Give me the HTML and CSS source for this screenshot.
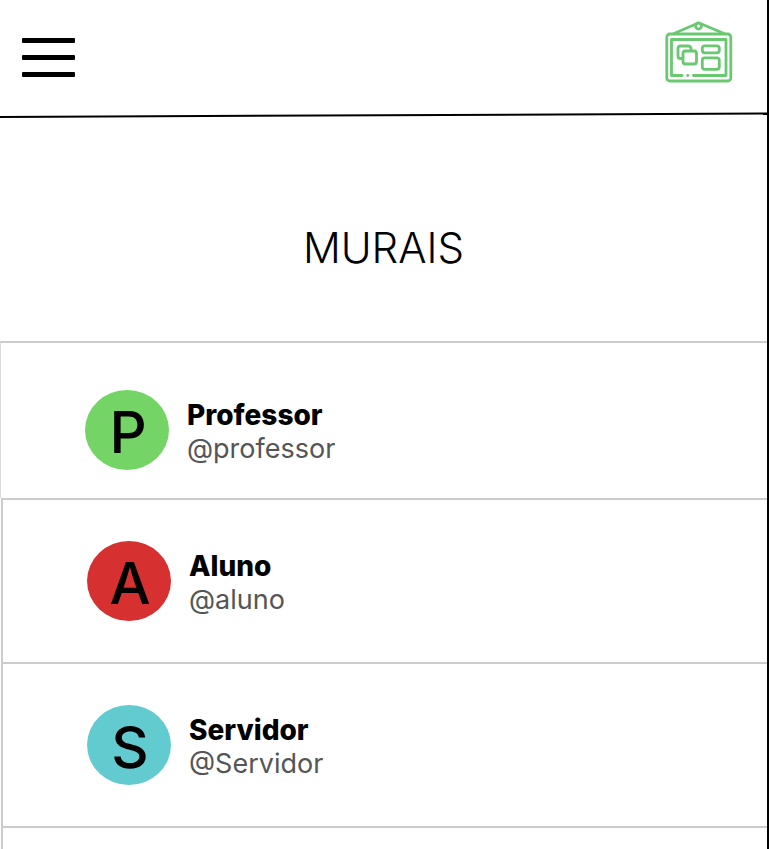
FILE: index.html
```html
<!DOCTYPE html>
<html lang="pt-BR">
<head>
<meta charset="utf-8">
<meta name="viewport" content="width=device-width, initial-scale=1">
<title>Murais</title>
<link rel="stylesheet" href="styles.css">
</head>
<body>
<header class="topbar">
  <button class="menu" type="button" aria-label="Menu"><span></span><span></span><span></span></button>
  <a class="logo" href="#" aria-label="Murais">
    <svg width="68" height="62" viewBox="0 0 68 62" fill="none" stroke="#69c870" stroke-width="2.8" stroke-linecap="round" stroke-linejoin="round">
      <rect x="1.800" y="13" width="64" height="47" rx="3"/>
      <path d="M17 54.500H6.500V18.500H61V54.500H28.500"/>
      <path d="M9 12.500L31 3M59 12.500L36.500 3"/>
      <circle cx="33.500" cy="5" r="3"/>
      <path d="M17.500 37.500H15.500a2.500 2.500 0 0 1-2.500-2.500V27.500a2.500 2.500 0 0 1 2.500-2.500H23.500a2.500 2.500 0 0 1 2.500 2.500V29"/>
      <rect x="18" y="30" width="13.500" height="13" rx="2.500"/>
      <rect x="37.300" y="24.800" width="17" height="7" rx="2.500"/>
      <rect x="37.300" y="36.800" width="17" height="11.500" rx="2.500"/>
      <path d="M22.700 54.500h.1"/>
    </svg>
  </a>
</header>
<svg class="divider" viewBox="0 0 768 6" preserveAspectRatio="none" aria-hidden="true"><path d="M0 5L768 1.500" stroke="#000" stroke-width="2"/></svg>
<main>
  <h1 class="title">MURAIS</h1>
  <ul class="boards">
    <li class="board board-first">
      <span class="avatar green">P</span>
      <div class="info"><a class="name" href="#">Professor</a><span class="handle">@professor</span></div>
    </li>
    <li class="board">
      <span class="avatar red">A</span>
      <div class="info"><a class="name" href="#">Aluno</a><span class="handle">@aluno</span></div>
    </li>
    <li class="board">
      <span class="avatar blue">S</span>
      <div class="info"><a class="name" href="#">Servidor</a><span class="handle">@Servidor</span></div>
    </li>
    <li class="board board-empty"></li>
  </ul>
</main>
</body>
</html>
```
FILE: styles.css
```css
* {
  box-sizing: border-box;
}

html {
  height: 100%;
}

body {
  display: flex;
  flex-direction: column;
  min-height: 100%;
  margin: 0;
  border-right: 2px solid #000;
  background: #fff;
  color: #000;
  font-family: Inter, "Liberation Sans", sans-serif;
}

.topbar {
  display: flex;
  align-items: flex-start;
  justify-content: space-between;
  height: 112px;
  padding: 21px 34px 0 22px;
}

.menu {
  display: flex;
  flex-direction: column;
  gap: 12px;
  margin-top: 17px;
  padding: 0;
  border: 0;
  background: none;
}

.menu span {
  width: 53px;
  height: 5px;
  border-radius: 1px;
  background: #000;
}

.logo svg {
  display: block;
}

.divider {
  display: block;
  width: 100%;
  height: 6px;
}

main {
  display: flex;
  flex: 1;
  flex-direction: column;
}

.title {
  margin: 106px 0 69px;
  font-size: 42px;
  font-weight: 300;
  line-height: 48px;
  text-align: center;
}

.boards {
  display: flex;
  flex: 1;
  flex-direction: column;
  margin: 0;
  padding: 0;
  list-style: none;
}

.board {
  display: flex;
  align-items: center;
  gap: 18px;
  margin-left: 1px;
  padding: 41px 84px;
  border-top: 2px solid #ccc;
  border-left: 2px solid #ccc;
}

.board-first {
  margin-left: 0;
  padding-top: 47px;
  padding-bottom: 28px;
  border-left: 1px solid #ddd;
}

.board-empty {
  flex: 1;
  padding: 0;
}

.avatar {
  width: 84px;
  height: 80px;
  padding-left: 2px;
  border-radius: 50%;
  font-size: 58px;
  font-weight: 500;
  line-height: 84px;
  text-align: center;
}

.green {
  background: #74d465;
}

.red {
  background: #d63030;
}

.blue {
  background: #62cbd0;
}

.info {
  display: flex;
  flex-direction: column;
  height: 64px;
  font-size: 28px;
  line-height: 34px;
}

.name {
  color: inherit;
  font-weight: 800;
  text-decoration: none;
}

.handle {
  color: #555;
  font-size: 27px;
}
```
